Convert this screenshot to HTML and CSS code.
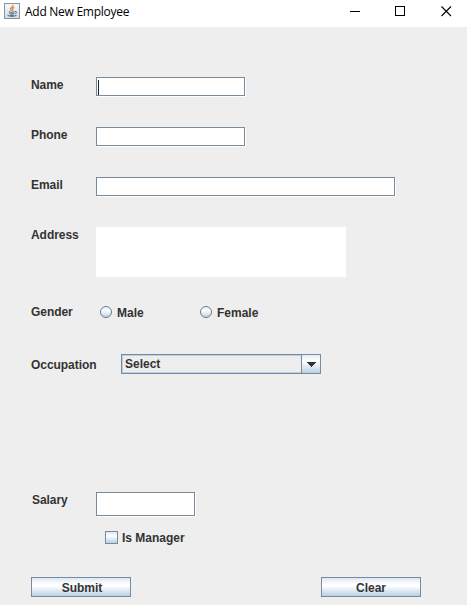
FILE: index.html
```html
<!DOCTYPE html>
<html lang="en">
<head>
<meta charset="utf-8">
<title>Add New Employee</title>
<link rel="stylesheet" href="styles.css">
</head>
<body>
<header class="titlebar">
  <svg class="app-icon" width="16" height="16" viewBox="0 0 16 16" fill="none">
    <defs><linearGradient id="tile" x1="0" y1="0" x2="0" y2="1"><stop stop-color="#f8fafb"/><stop offset="1" stop-color="#cfdde5"/></linearGradient></defs>
    <rect x=".5" y=".5" width="15" height="15" fill="url(#tile)" stroke="#8297a3"/>
    <path d="M9 1.800C9.800 4 6 4.600 6.500 6.300c.2.7.9 1 1 1.700M10.300 4.300C8.500 5.100 8 5.800 8.700 6.600c.4.6.1 1-.3 1.400" stroke="#e58a3c" stroke-width="1.300"/>
    <path d="M4.800 8.800c1.800.6 4.200.6 6 0M5.300 10.500c1.600.6 3.500.6 5 0M11 8.700c2-.7 2.200 1.300.3 2M3.500 12.300c2.500 1.300 6.500 1.200 9 .1M6 12.100c1.200.4 2.600.4 3.800 0" stroke="#3f607e" stroke-width="1"/>
  </svg>
  <h1 class="title">Add New Employee</h1>
  <svg class="controls" width="103" height="12" viewBox="0 0 103 12" fill="none" stroke="#000" shape-rendering="crispEdges">
    <path d="M0 6.500h10M45.500 1.500h9v9h-9z"/>
    <path d="M91.500 1.500l9.500 9.500M101 1.500L91.500 11" shape-rendering="auto" stroke-width="1.100"/>
  </svg>
</header>
<form class="form">
  <div class="row"><span class="label">Name</span><div class="field medium"><i class="caret"></i></div></div>
  <div class="row"><span class="label">Phone</span><div class="field medium"></div></div>
  <div class="row"><span class="label">Email</span><div class="field wide"></div></div>
  <div class="row address"><span class="label">Address</span><div class="area"></div></div>
  <div class="row gender">
    <span class="label">Gender</span>
    <div class="radios">
      <span class="option"><svg width="12" height="12" viewBox="0 0 12 12"><defs><linearGradient id="ball" x1="0" y1="0" x2="0" y2="1"><stop stop-color="#e6eff7"/><stop offset=".35" stop-color="#fff"/><stop offset="1" stop-color="#b8cfe5"/></linearGradient></defs><circle cx="6" cy="6" r="5.500" fill="url(#ball)" stroke="#6b7a88"/></svg>Male</span>
      <span class="option"><svg width="12" height="12" viewBox="0 0 12 12"><circle cx="6" cy="6" r="5.500" fill="url(#ball)" stroke="#6b7a88"/></svg>Female</span>
    </div>
  </div>
  <div class="row occupation">
    <span class="label">Occupation</span>
    <div class="combo"><span class="value">Select</span><span class="arrow"><svg width="10" height="5" viewBox="0 0 10 5" shape-rendering="crispEdges"><path d="M0 0h10L5 5z" fill="#333"/></svg></span></div>
  </div>
  <div class="row salary"><span class="label">Salary</span><div class="field short"></div></div>
  <div class="manager"><i class="check"></i><span>Is Manager</span></div>
  <div class="actions"><button type="button" class="button submit">Submit</button><button type="button" class="button">Clear</button></div>
</form>
</body>
</html>
```

FILE: styles.css
```css
* { box-sizing: border-box; }

body {
  margin: 0;
  width: 467px;
  height: 605px;
  overflow: hidden;
  background: #eee;
  color: #333;
  font: bold 12px/16px "Liberation Sans", Arial, sans-serif;
}

.titlebar {
  display: flex;
  align-items: flex-start;
  height: 27px;
  padding: 3px 14px 0 4px;
  background: #fff;
}

.title {
  margin: 0 auto 0 5px;
  color: #000;
  font: 12px/18px "Open Sans", "Noto Sans", sans-serif;
  letter-spacing: -.27px;
  white-space: nowrap;
}

.controls { margin-top: 2px; }

.form { padding: 50px 46px 0 31px; }
.row { display: flex; align-items: flex-start; height: 50px; }
.label { flex: none; width: 65px; letter-spacing: -.05px; }

.field {
  height: 19px;
  padding: 2px 1px;
  border: 1px solid #7a8a99;
  background: #fff;
  box-shadow: 1px 1px #fff;
}
.medium { width: 149px; }
.wide { width: 299px; }
.short { width: 99px; height: 24px; }
.caret { display: block; width: 1px; height: 15px; background: #222; }

.address { height: 75px; }
.area { width: 250px; height: 50px; background: #fff; }

.gender { height: 52px; padding-top: 2px; }
.radios { display: flex; padding: 1px 0 0 4px; }
.option { display: flex; width: 100px; gap: 5px; }
.option svg { margin-top: 1px; }

.occupation { height: 138px; }
.occupation .label { width: 90px; padding-top: 3px; }
.combo {
  display: flex;
  width: 200px;
  height: 20px;
  border: 1px solid #7a8a99;
}
.value {
  flex: 1;
  padding: 0 2px;
  border: 1px solid #b8cfe5;
  border-right: 0;
}
.arrow {
  display: flex;
  align-items: center;
  width: 19px;
  padding-left: 4px;
  border-left: 1px solid #7a8a99;
  background: linear-gradient(#e3edf6, #fff 35%, #b8cfe5);
}

.salary { height: 39px; padding-left: 1px; }
.salary .label { width: 64px; }

.manager { display: flex; gap: 4px; height: 46px; padding-left: 74px; }
.manager span { margin-top: -1px; }
.check {
  width: 13px;
  height: 13px;
  border: 1px solid #7a8a99;
  background: linear-gradient(#dde8f3, #fff 35%, #b8cfe5);
}

.actions { display: flex; justify-content: space-between; }
.button {
  width: 100px;
  height: 20px;
  padding: 1px 0 0;
  border: 1px solid #7a8a99;
  background: linear-gradient(#dce8f3, #fff 35%, #fff 45%, #b8cfe5);
  color: #333;
  font: inherit;
}
.submit { padding-left: 2px; }
```
